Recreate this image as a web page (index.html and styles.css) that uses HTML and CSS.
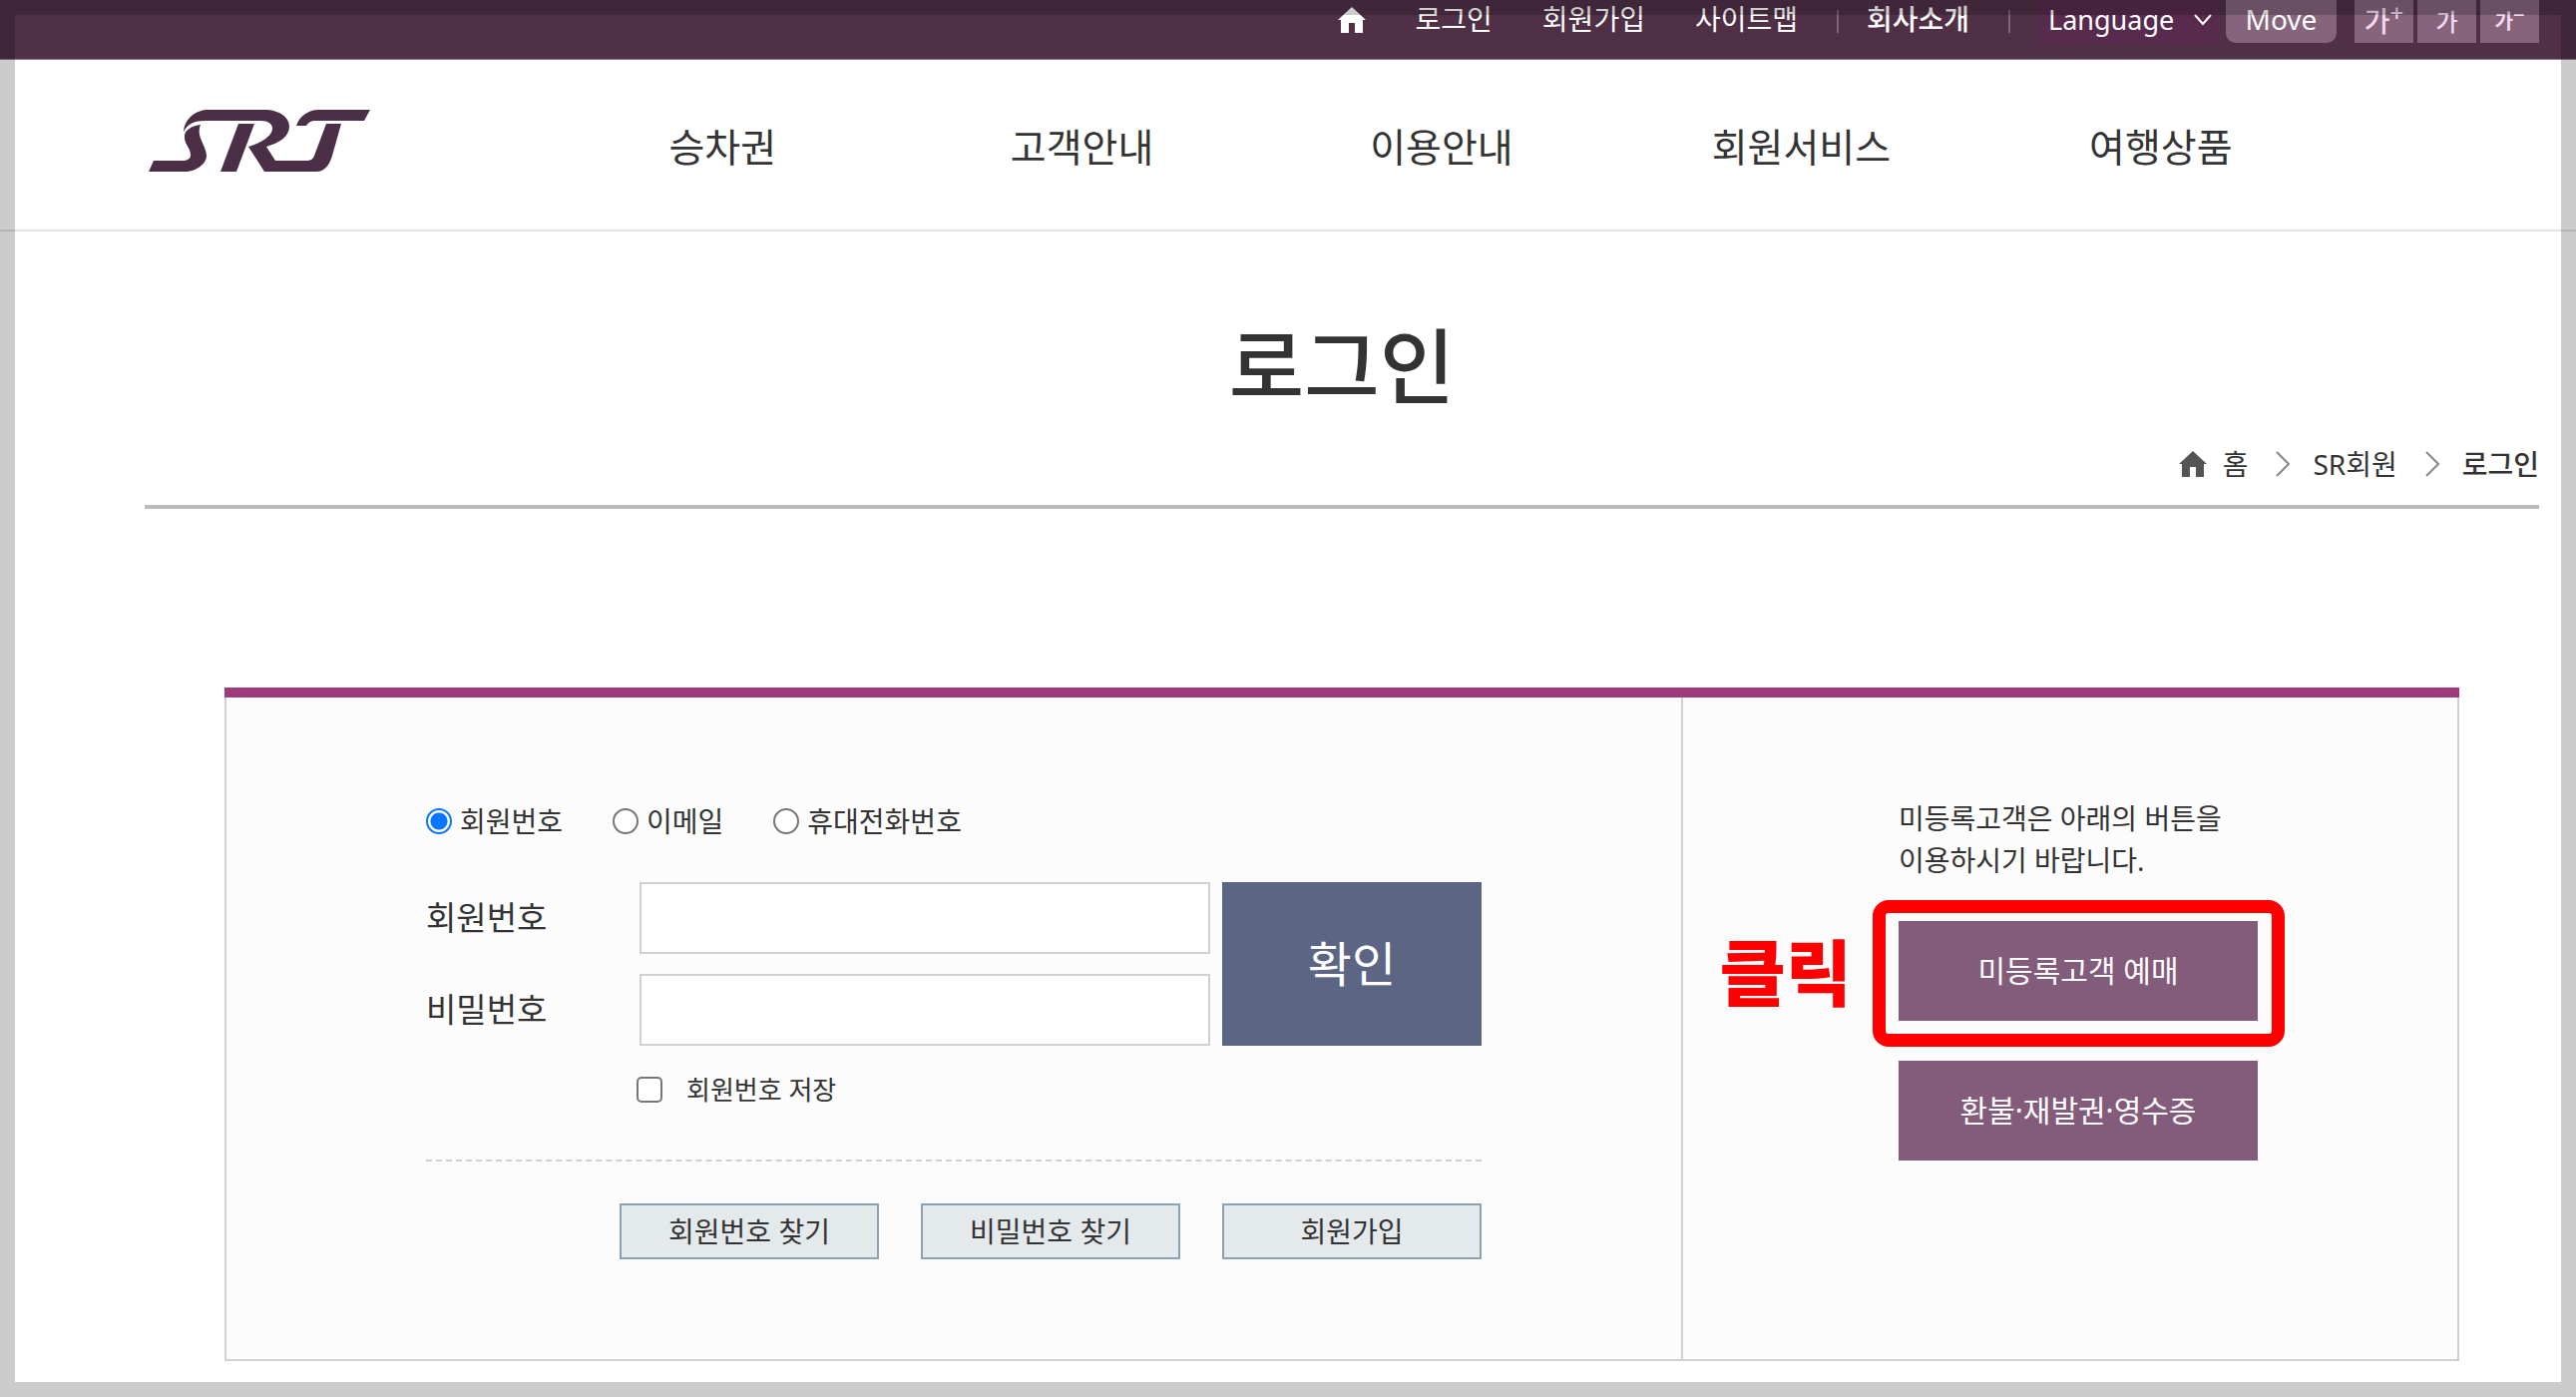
FILE: index.html
```html
<!DOCTYPE html>
<html lang="ko">
<head>
<meta charset="utf-8">
<meta name="viewport" content="width=device-width, initial-scale=1">
<title>로그인 | SRT</title>
<link rel="stylesheet" href="styles.css">
</head>
<body>
<svg class="symbols" aria-hidden="true">
  <symbol id="home" viewBox="0 0 28 26"><path d="M14 0L28 13H25V26H17V16H11V26H3V13H0Z" fill="currentColor"/></symbol>
  <symbol id="next" viewBox="0 0 14 26"><path d="M1 1L13 13L1 25" fill="none" stroke="#888888" stroke-width="2"/></symbol>
</svg>

<div class="topbar">
  <nav class="topbar-links" aria-label="바로가기">
    <a href="#" aria-label="홈"><svg class="topbar-home"><use href="#home"/></svg></a>
    <a href="#">로그인</a>
    <a href="#">회원가입</a>
    <a href="#">사이트맵</a>
  </nav>
  <span class="divider"></span>
  <a class="company" href="#">회사소개</a>
  <span class="divider"></span>
  <div class="language">
    <select class="language-select" aria-label="Language"><option>Language</option></select>
    <svg class="language-arrow" viewBox="0 0 18 12"><path d="M1 1L9 10L17 1" fill="none" stroke="#fff" stroke-width="2"/></svg>
  </div>
  <button class="move" type="button">Move</button>
  <div class="zoom">
    <button class="zoom-button zoom-large" type="button">가<sup>+</sup></button>
    <button class="zoom-button zoom-normal" type="button">가</button>
    <button class="zoom-button zoom-small" type="button">가<sup>−</sup></button>
  </div>
</div>

<header class="header">
  <a class="logo" href="#" aria-label="SRT">
    <svg class="logo-mark" viewBox="0 0 222 62" fill="#4b2f47">
      <path d="M35 22C36 8 48 0 60 0H116C132 0 141 8 141 17C141 26 132 33 118 37L127 51H157C163 51 165 49 166 46L178 14H193L184 46C181 56 176 62 168 62H116L100 37C116 32 124 25 124 19C124 14 120 11 112 11H57C46 11 39 14 35 22Z"/>
      <path d="M90 14H106L88 62H72Z"/>
      <path d="M52 15C47 27 58 36 58 46C58 54 48 62 36 62H0L5 51H33C39 51 42 49 42 45C42 38 35 34 36 26C36 20 44 16 52 15Z"/>
      <path d="M148 16C151 6 161 0 170 0H222L216 11H168C162 11 160 13 158 16Z"/>
    </svg>
  </a>
  <nav class="menu" aria-label="주 메뉴">
    <a href="#">승차권</a>
    <a href="#">고객안내</a>
    <a href="#">이용안내</a>
    <a href="#">회원서비스</a>
    <a href="#">여행상품</a>
  </nav>
</header>

<main class="main">
  <div class="page-head">
    <h1 class="title">로그인</h1>
    <nav class="crumbs" aria-label="현재 위치">
      <svg class="crumb-home"><use href="#home"/></svg>
      <a href="#">홈</a>
      <svg class="crumb-next"><use href="#next"/></svg>
      <a href="#">SR회원</a>
      <svg class="crumb-next"><use href="#next"/></svg>
      <a class="current" href="#">로그인</a>
    </nav>
  </div>

  <div class="login">
    <form class="member">
      <div class="kinds" role="radiogroup" aria-label="로그인 방식">
        <label class="kind"><input type="radio" name="kind" checked>회원번호</label>
        <label class="kind"><input type="radio" name="kind">이메일</label>
        <label class="kind"><input type="radio" name="kind">휴대전화번호</label>
      </div>
      <div class="fields">
        <div class="field-rows">
          <div class="field"><label for="member-id">회원번호</label><input id="member-id" type="text"></div>
          <div class="field"><label for="member-pw">비밀번호</label><input id="member-pw" type="password"></div>
        </div>
        <button class="submit" type="submit">확인</button>
      </div>
      <label class="remember"><input type="checkbox">회원번호 저장</label>
      <div class="helpers">
        <button class="helper" type="button">회원번호 찾기</button>
        <button class="helper" type="button">비밀번호 찾기</button>
        <button class="helper" type="button">회원가입</button>
      </div>
    </form>
    <section class="guest">
      <p class="guest-text">미등록고객은 아래의 버튼을<br>이용하시기 바랍니다.</p>
      <div class="guest-action">
        <button class="guest-button" type="button">미등록고객 예매</button>
        <span class="ring"></span>
        <strong class="click">클릭</strong>
      </div>
      <button class="guest-button" type="button">환불·재발권·영수증</button>
    </section>
  </div>
</main>
<div class="frame"></div>
</body>
</html>
```
FILE: styles.css
```css
* {
  box-sizing: border-box;
}

body {
  margin: 0;
  min-height: 100vh;
  background: #fff;
  color: #333;
  font: 28px/42px "Noto Sans", "Noto Sans CJK KR", sans-serif;
}

a {
  color: inherit;
  text-decoration: none;
}

button,
input,
select {
  margin: 0;
  font: inherit;
  color: inherit;
}

button {
  padding: 0;
  border: 0;
}

.symbols {
  position: absolute;
  width: 0;
  height: 0;
}

.frame {
  position: fixed;
  inset: 0;
  border: 15px solid rgba(0, 0, 0, 0.2);
  pointer-events: none;
}

/* Top bar */

.topbar {
  display: flex;
  justify-content: flex-end;
  height: 60px;
  padding-right: 37px;
  border-bottom: 1px solid #8d7888;
  background: #4f3047;
  color: #fff;
  line-height: 38px;
}

.topbar-links {
  display: flex;
  gap: 50px;
}

.topbar-home {
  display: block;
  width: 28px;
  height: 26px;
  margin-top: 7px;
}

.divider {
  width: 2px;
  height: 23px;
  margin: 10px 28px 0 39px;
  background: #7c6476;
}

.company {
  font-weight: 500;
}

.language {
  position: relative;
  height: 43px;
}

.language-select {
  width: 180px;
  height: 43px;
  padding: 0 10px 5px;
  border: 0;
  background: #582b4e;
  font-size: 27px;
  appearance: none;
}

.language-arrow {
  position: absolute;
  top: 14px;
  right: 6px;
  width: 18px;
  height: 12px;
}

.move {
  width: 111px;
  height: 43px;
  margin: 0 18px 0 8px;
  padding-bottom: 5px;
  border-radius: 0 0 10px 10px;
  background: #86647c;
}

.zoom {
  display: flex;
  gap: 4px;
}

.zoom-button {
  width: 59px;
  height: 43px;
  background: #86647c;
  color: #f4daf1;
  font-weight: 500;
  line-height: 43px;
}

.zoom-button sup {
  font-size: 24px;
  line-height: 0;
  vertical-align: 10px;
}

.zoom-normal {
  font-size: 24px;
}

.zoom-small {
  font-size: 20px;
  font-weight: 700;
}

.zoom-small sup {
  font-size: 20px;
  vertical-align: 7px;
}

/* Header */

.header {
  display: flex;
  align-items: flex-start;
  height: 172px;
  padding: 50px 37px 0 149px;
  border-bottom: 2px solid #e3e3e3;
}

.logo-mark {
  display: block;
  width: 222px;
  height: 62px;
}

.menu {
  display: grid;
  grid-template-columns: repeat(5, 1fr);
  flex: 1;
  margin: 0 199px 0 173px;
  font-size: 39px;
  line-height: 74px;
  text-align: center;
}

/* Page head */

.main {
  padding: 0 37px 20px 145px;
}

.page-head {
  padding: 77px 0 20px;
  border-bottom: 4px solid #bbb;
}

.title {
  margin: 0 0 21px;
  font-size: 82px;
  font-weight: 500;
  line-height: 114px;
  text-align: center;
}

.crumbs {
  display: flex;
  align-items: center;
  justify-content: flex-end;
}

.crumb-home {
  width: 28px;
  height: 26px;
  margin-right: 16px;
  color: #555;
}

.crumb-next {
  width: 14px;
  height: 26px;
  margin: 0 23px 0 28px;
}

.current {
  font-weight: 500;
}

/* Login box */

.login {
  display: flex;
  margin: 179px 80px 0;
  border-top: 10px solid #9d3a7d;
  box-shadow: inset 2px -2px #d0d0d0, inset -2px 0 #d0d0d0;
  background: #fcfcfc;
}

.member {
  flex: 1;
  padding: 103px 200px 102px 202px;
}

.kinds {
  display: flex;
  gap: 50px;
}

.kind,
.remember {
  display: flex;
  align-items: center;
}

.kind input,
.remember input {
  width: 26px;
  height: 26px;
  border: 2px solid #767676;
  background: #fff;
  appearance: none;
}

.kind input {
  margin-right: 8px;
  border-radius: 50%;
}

.kind input:checked {
  border-color: #0a75ff;
  background: radial-gradient(#0a75ff 8px, #fff 9px);
}

.fields {
  display: flex;
  gap: 12px;
  margin-top: 40px;
}

.field-rows {
  display: grid;
  flex: 1;
  gap: 20px;
}

.field {
  display: flex;
  align-items: center;
  font-size: 33px;
}

.field label {
  width: 214px;
}

.field input {
  flex: 1;
  min-width: 0;
  height: 72px;
  padding: 0 16px;
  border: 2px solid #d0d0d0;
  background: #fff;
}

.submit {
  width: 260px;
  background: #5d6584;
  color: #fff;
  font-size: 48px;
}

.remember {
  margin: 23px 0 0 211px;
  font-size: 26px;
}

.remember input {
  margin-right: 24px;
  border-radius: 5px;
}

.helpers {
  display: flex;
  justify-content: flex-end;
  gap: 42px;
  margin-top: 49px;
  padding-top: 42px;
  border-top: 2px dashed #d0d0d0;
}

.helper {
  width: 260px;
  height: 56px;
  border: 2px solid #8aa2b3;
  background: #e4e9ec;
}

.guest {
  width: 780px;
  padding: 100px 200px 100px 216px;
  border-left: 2px solid #d0d0d0;
}

.guest-text {
  margin: 0 0 40px;
}

.guest-action {
  position: relative;
  width: 360px;
  margin-bottom: 40px;
}

.guest-button {
  display: block;
  width: 360px;
  height: 100px;
  background: #845c7b;
  color: #fff;
  font-size: 30px;
}

.ring {
  position: absolute;
  inset: -21px -27px -26px -26px;
  border: 13px solid #f00;
  border-radius: 16px;
}

.click {
  position: absolute;
  top: 0;
  right: 407px;
  color: #f00;
  font-size: 72px;
  font-weight: 900;
  line-height: 102px;
  white-space: nowrap;
}
```
